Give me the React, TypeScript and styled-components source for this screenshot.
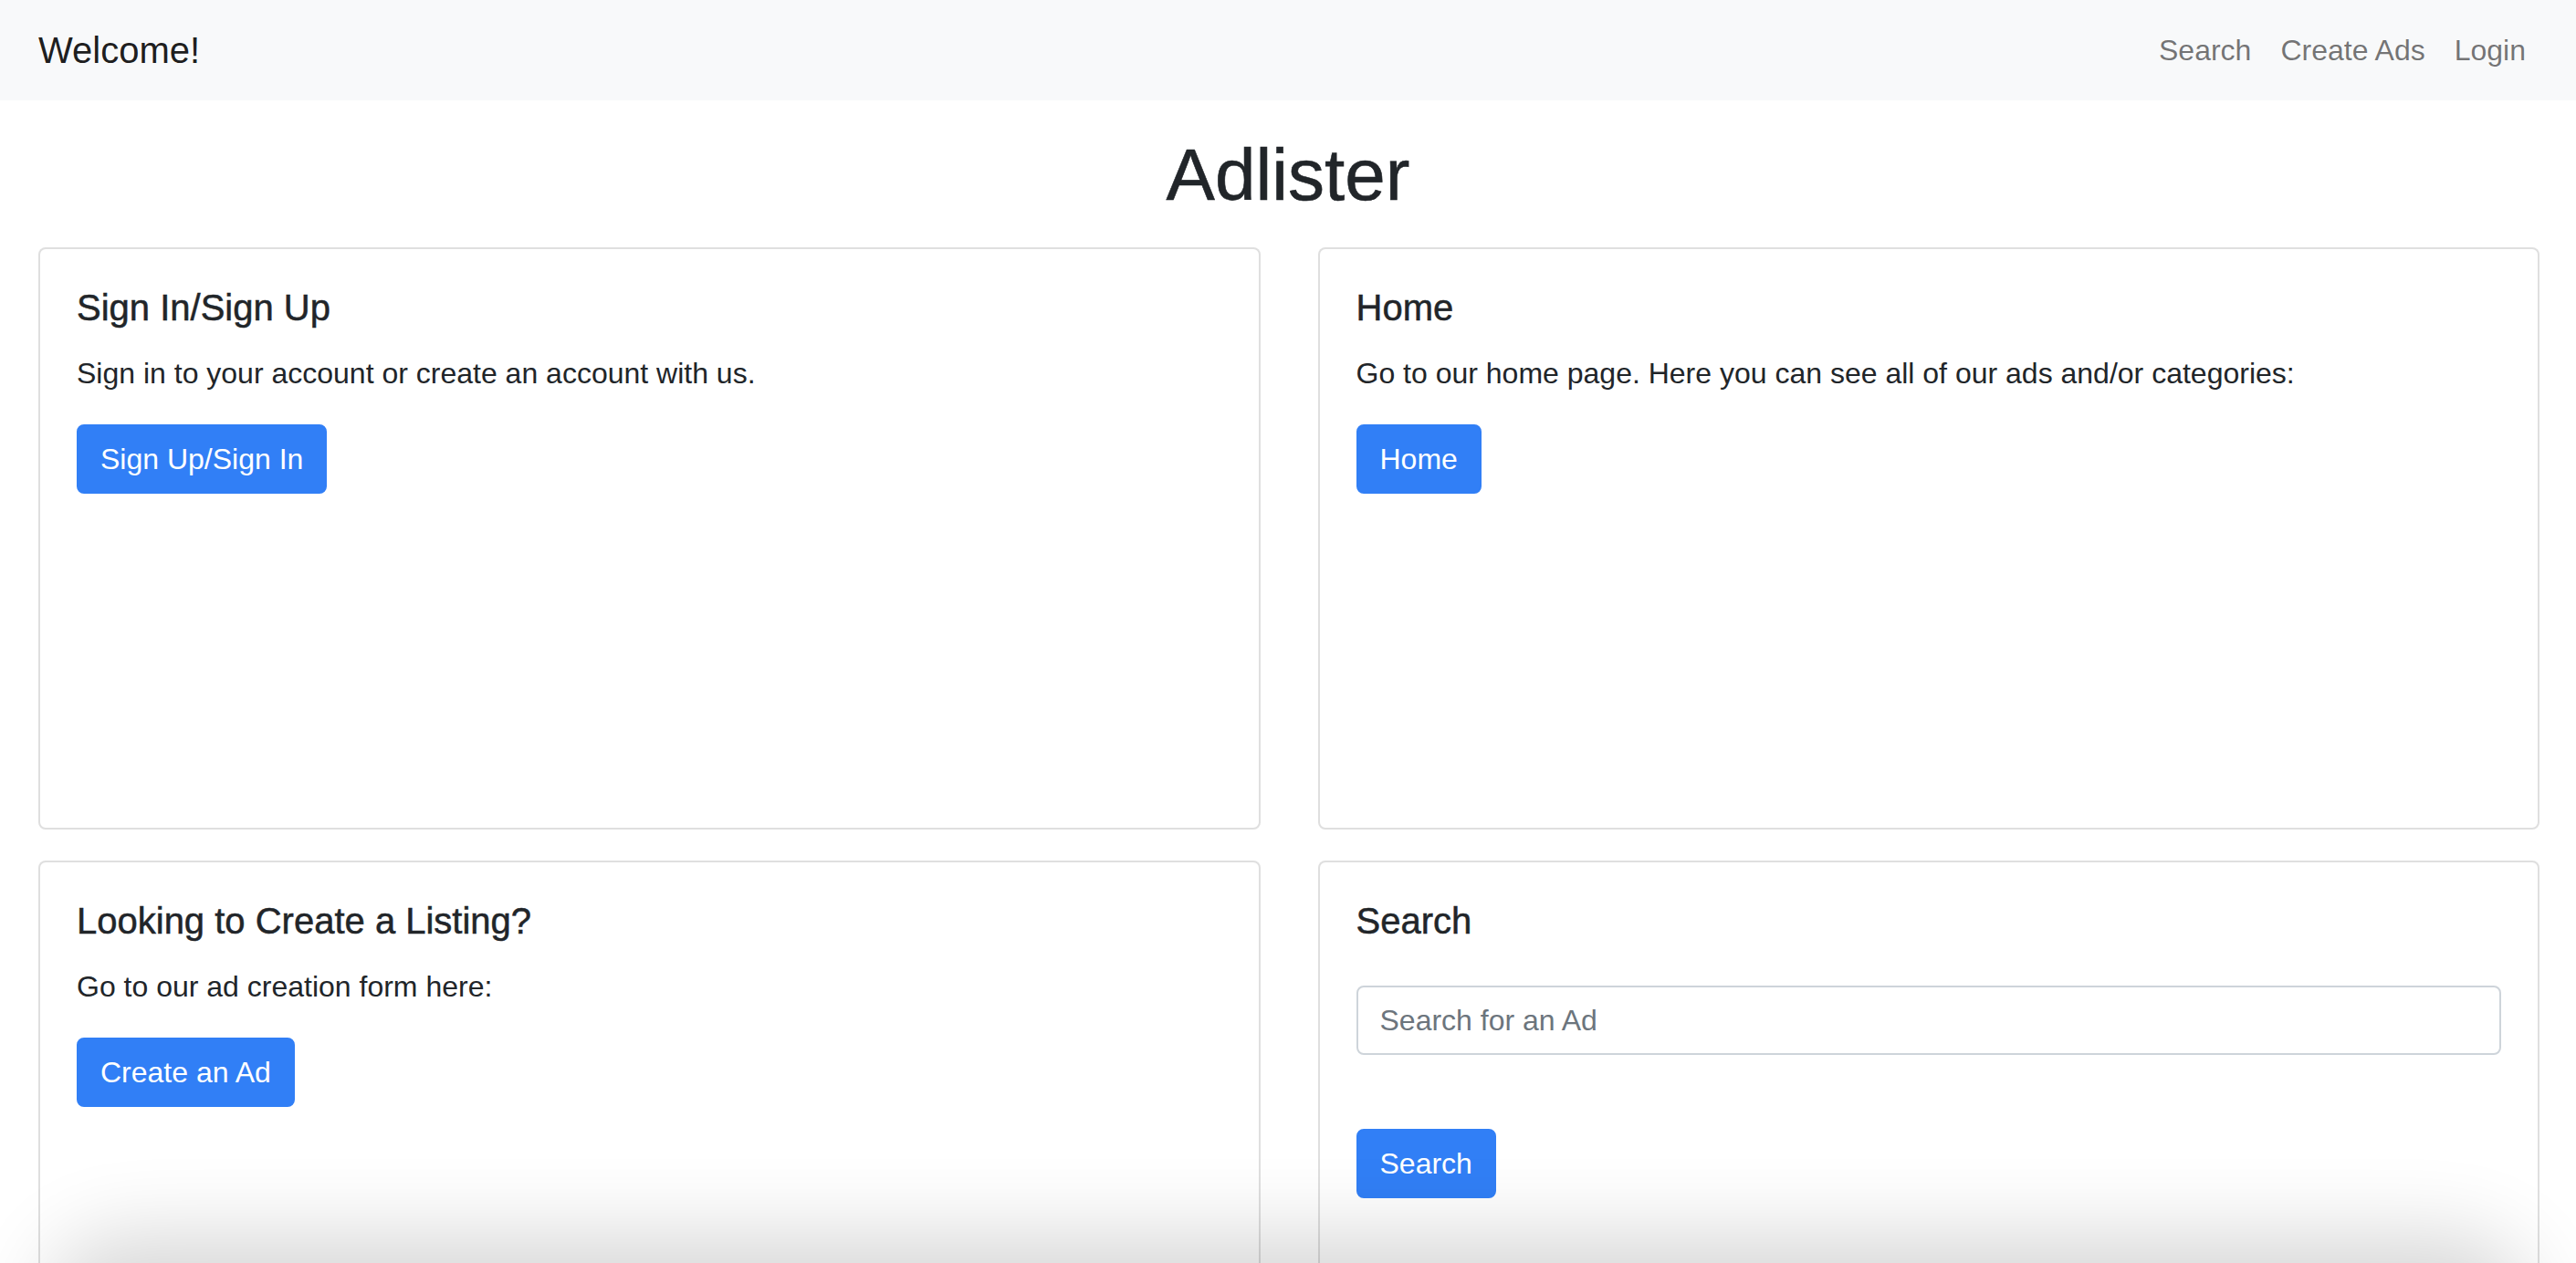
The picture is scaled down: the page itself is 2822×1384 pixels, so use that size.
import React from "react";
import styled, { createGlobalStyle } from "styled-components";

const GlobalStyle = createGlobalStyle`
  * {
    box-sizing: border-box;
  }

  body {
    margin: 0;
    background: #fff;
    color: #212529;
    font-family: "Liberation Sans", Arial, sans-serif;
  }
`;

const Navbar = styled.nav`
  height: 110px;
  display: flex;
  align-items: center;
  justify-content: space-between;
  padding: 0 39px 0 42px;
  background-color: #f8f9fa;
`;

const Brand = styled.a`
  font-size: 40px;
  line-height: 60px;
  color: rgba(0, 0, 0, 0.9);
  text-decoration: none;
`;

const NavList = styled.ul`
  display: flex;
  list-style: none;
  margin: 0;
  padding: 0;
`;

const NavLink = styled.a`
  display: block;
  padding: 0 16px;
  font-size: 32px;
  line-height: 48px;
  color: rgba(0, 0, 0, 0.55);
  text-decoration: none;
`;

const PageTitle = styled.h1`
  margin: 34px 0 31px;
  text-align: center;
  font-size: 80px;
  font-weight: 500;
  line-height: 1.2;
  -webkit-text-stroke: 0.6px currentColor;
`;

const CardGrid = styled.main`
  display: grid;
  grid-template-columns: 1fr 1fr;
  column-gap: 63px;
  row-gap: 34px;
  padding: 0 40px 0 42px;
`;

const Card = styled.section`
  height: 638px;
  padding: 40px;
  border: 2px solid rgba(0, 0, 0, 0.125);
  border-radius: 8px;
  background: #fff;
`;

const CardTitle = styled.h5`
  margin: 0 0 24px;
  font-size: 40px;
  font-weight: 500;
  line-height: 1.2;
  -webkit-text-stroke: 0.5px currentColor;
`;

const CardText = styled.p`
  margin: 0 0 32px;
  font-size: 32px;
  line-height: 48px;
`;

const PrimaryButton = styled.button<{ $gap?: number }>`
  display: inline-block;
  margin-top: ${({ $gap }) => $gap ?? 0}px;
  padding: 12px 24px;
  font-family: inherit;
  font-size: 32px;
  line-height: 48px;
  color: #fff;
  background-color: #317ff6;
  border: 2px solid #317ff6;
  border-radius: 8px;
  cursor: pointer;
`;

const SearchForm = styled.form`
  display: flex;
  flex-direction: column;
  align-items: flex-start;
`;

const SearchInput = styled.input`
  width: 100%;
  height: 76px;
  margin-top: 23px;
  padding: 12px 24px;
  font-family: inherit;
  font-size: 32px;
  color: #212529;
  border: 2px solid #ced4da;
  border-radius: 8px;

  &::placeholder {
    color: #6c757d;
  }
`;

// soft shadow creeping up from below the fold
const BottomShade = styled.div`
  position: fixed;
  left: 80px;
  right: 80px;
  bottom: -110px;
  height: 110px;
  border-radius: 60px;
  box-shadow: 0 0 90px 30px rgba(0, 0, 0, 0.16);
  pointer-events: none;
`;

export default function App() {
  return (
    <>
      <GlobalStyle />
      <Navbar>
        <Brand href="#">Welcome!</Brand>
        <NavList>
          <li><NavLink href="#">Search</NavLink></li>
          <li><NavLink href="#">Create Ads</NavLink></li>
          <li><NavLink href="#">Login</NavLink></li>
        </NavList>
      </Navbar>

      <PageTitle>Adlister</PageTitle>

      <CardGrid>
        <Card>
          <CardTitle>Sign In/Sign Up</CardTitle>
          <CardText>Sign in to your account or create an account with us.</CardText>
          <PrimaryButton>Sign Up/Sign In</PrimaryButton>
        </Card>

        <Card>
          <CardTitle>Home</CardTitle>
          <CardText>Go to our home page. Here you can see all of our ads and/or categories:</CardText>
          <PrimaryButton>Home</PrimaryButton>
        </Card>

        <Card>
          <CardTitle>Looking to Create a Listing?</CardTitle>
          <CardText>Go to our ad creation form here:</CardText>
          <PrimaryButton>Create an Ad</PrimaryButton>
        </Card>

        <Card>
          <CardTitle>Search</CardTitle>
          <SearchForm onSubmit={(e) => e.preventDefault()}>
            <SearchInput type="text" placeholder="Search for an Ad" />
            <PrimaryButton type="submit" $gap={81}>Search</PrimaryButton>
          </SearchForm>
        </Card>
      </CardGrid>

      <BottomShade />
    </>
  );
}
